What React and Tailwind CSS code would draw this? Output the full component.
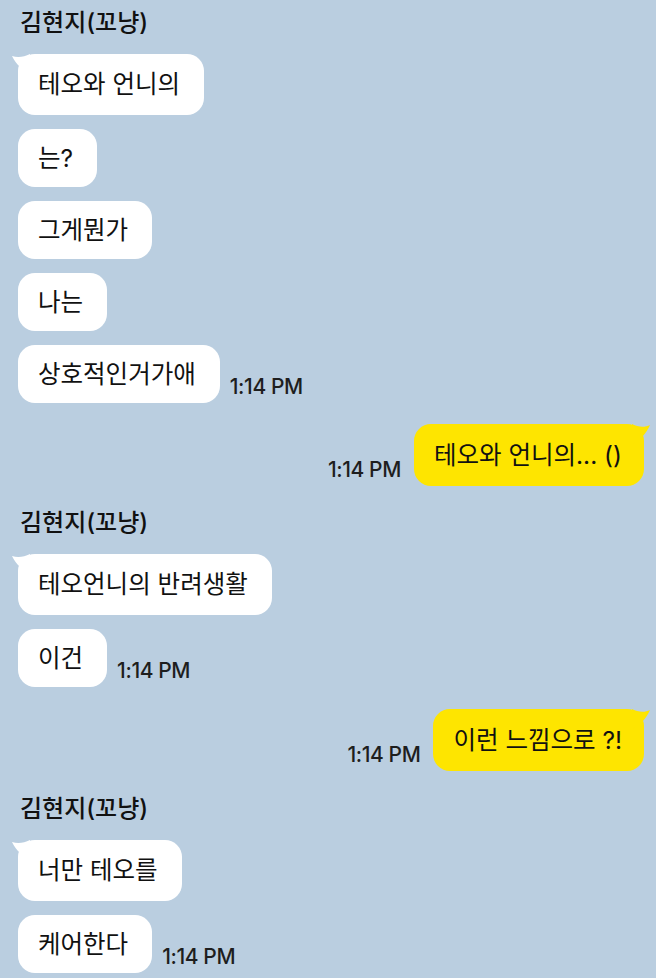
import React from "react";

const font = { fontFamily: '"Inter", "Noto Sans CJK KR", sans-serif' };

function Tail({ side }) {
  if (side === "right") {
    return (
      <svg className="absolute -right-[6px] top-0" width="20" height="22" viewBox="0 0 20 22">
        <path d="M20 1 C14 4 8 3 2 0 L2 20 C10 16 16 10 20 1 Z" fill="#fee500" />
      </svg>
    );
  }
  return (
    <svg className="absolute -left-[6px] top-0" width="20" height="22" viewBox="0 0 20 22">
      <path d="M0 2 C6 4 12 3 18 0 L18 20 C10 16 4 10 0 2 Z" fill="#ffffff" />
    </svg>
  );
}

function Time() {
  return <span className="text-[21px] leading-none text-[#1e1e1e] font-medium pb-[6px] tracking-[-0.4px]">1:14 PM</span>;
}

function Bubble({ text, tail, time, first, className = "" }) {
  return (
    <div className={`flex items-end gap-[10px] ${className}`}>
      <div
        className={`relative bg-white rounded-[17px] pl-[20px] pr-[24px] flex items-center text-[24.5px] text-[#111] ${first ? "h-[61px]" : "h-[58px]"}`}
      >
        {tail && <Tail side="left" />}
        <span className="relative">{text}</span>
      </div>
      {time && <Time />}
    </div>
  );
}

function MyBubble({ text, className = "" }) {
  return (
    <div className={`flex items-end justify-end gap-[13px] pr-[12px] ${className}`}>
      <Time />
      <div className="relative bg-[#fee500] rounded-[17px] pl-[20px] pr-[22px] h-[62px] flex items-center text-[24.5px] text-[#111]">
        <Tail side="right" />
        <span className="relative">{text}</span>
      </div>
    </div>
  );
}

function Name({ className = "" }) {
  return <div className={`pl-[20px] text-[24px] font-medium leading-[30px] text-[#111] ${className}`}>김현지(꼬냥)</div>;
}

export default function App() {
  return (
    <div className="w-[656px] h-[978px] bg-[#bacee0] overflow-hidden" style={font}>
      <div className="flex flex-col">
        <Name className="mt-[8px]" />
        <div className="pl-[18px] flex flex-col gap-[14px] mt-[16px]">
          <Bubble text="테오와 언니의" tail first />
          <Bubble text="는?" />
          <Bubble text="그게뭔가" />
          <Bubble text="나는" />
          <Bubble text="상호적인거가애" time />
        </div>
        <MyBubble text="테오와 언니의... ()" className="mt-[21px]" />
        <Name className="mt-[22px]" />
        <div className="pl-[18px] flex flex-col gap-[14px] mt-[16px]">
          <Bubble text="테오언니의 반려생활" tail first />
          <Bubble text="이건" time />
        </div>
        <MyBubble text="이런 느낌으로 ?!" className="mt-[22px]" />
        <Name className="mt-[23px]" />
        <div className="pl-[18px] flex flex-col gap-[14px] mt-[16px]">
          <Bubble text="너만 테오를" tail first />
          <Bubble text="케어한다" time />
        </div>
      </div>
    </div>
  );
}
